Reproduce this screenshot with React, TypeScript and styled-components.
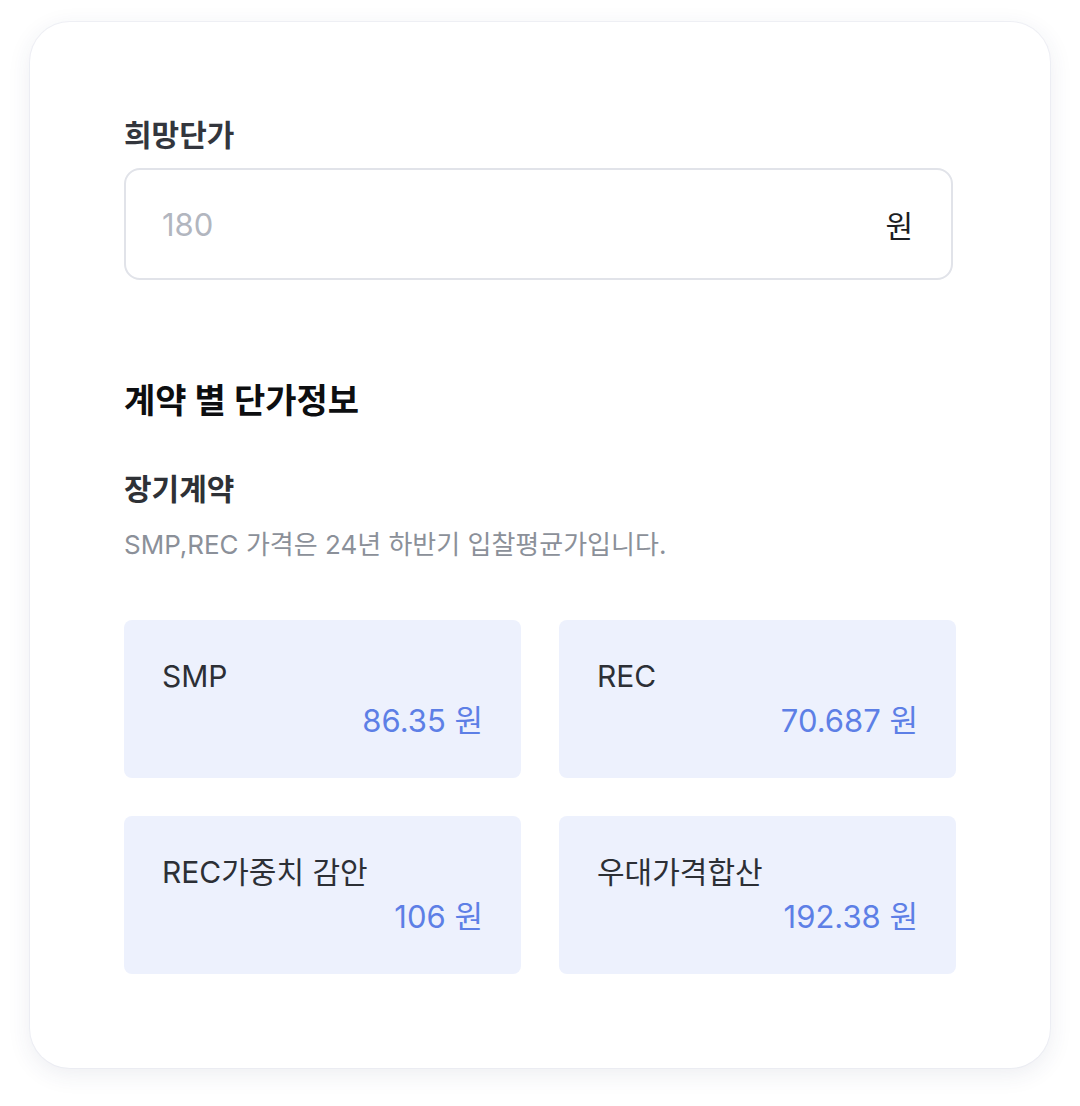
import React from 'react';
import styled, { createGlobalStyle } from 'styled-components';

const GlobalStyle = createGlobalStyle`
  body {
    margin: 0;
    background: #ffffff;
    font-family: Inter, "Noto Sans CJK KR", sans-serif;
  }
`;

const Page = styled.div`
  padding: 22px 30px 38px;
`;

const Card = styled.div`
  background: #ffffff;
  border-radius: 40px;
  box-shadow: 0 0 0 1px rgba(230, 232, 240, 0.6), 0 6px 24px rgba(40, 50, 100, 0.09);
  padding: 94px;
  display: flex;
  flex-direction: column;
`;

const FieldLabel = styled.div`
  font-size: 30px;
  font-weight: 700;
  color: #33363d;
  line-height: 34px;
  margin-top: 2px;
  margin-bottom: 16px;
`;

const InputBox = styled.div`
  width: 829px;
  height: 112px;
  box-sizing: border-box;
  border: 2px solid #e1e3e9;
  border-radius: 16px;
  display: flex;
  align-items: center;
  justify-content: space-between;
  padding: 0 38px 0 36px;
`;

const Placeholder = styled.span`
  font-size: 31px;
  color: #b2b6bf;
`;

const Unit = styled.span`
  font-size: 30px;
  color: #1c1e22;
`;

const SectionTitle = styled.h2`
  margin: 99px 0 0;
  font-size: 34px;
  font-weight: 700;
  color: #0d0e10;
  line-height: 44px;
`;

const SubTitle = styled.h3`
  margin: 48px 0 0;
  font-size: 30px;
  font-weight: 700;
  color: #2e3136;
  line-height: 36px;
`;

const Note = styled.p`
  margin: 20px 0 0;
  font-size: 26px;
  color: #8b9099;
  line-height: 36px;
`;

const PriceGrid = styled.div`
  margin-top: 57px;
  display: grid;
  grid-template-columns: 397px 397px;
  gap: 38px;
`;

const PriceTile = styled.div`
  background: #edf1fd;
  border-radius: 8px;
  height: 158px;
  box-sizing: border-box;
  padding: 36px 38px 0;
  display: flex;
  flex-direction: column;
`;

const TileLabel = styled.div`
  font-size: 30px;
  color: #2c2f35;
  line-height: 40px;
`;

const TileValue = styled.div`
  font-size: 31px;
  color: #5d7fe6;
  line-height: 40px;
  text-align: right;
  margin-top: 5px;
`;

const prices = [
  { label: 'SMP', value: '86.35' },
  { label: 'REC', value: '70.687' },
  { label: 'REC가중치 감안', value: '106' },
  { label: '우대가격합산', value: '192.38' },
];

const App: React.FC = () => {
  return (
    <Page>
      <GlobalStyle />
      <Card>
        <FieldLabel>희망단가</FieldLabel>
        <InputBox>
          <Placeholder>180</Placeholder>
          <Unit>원</Unit>
        </InputBox>

        <SectionTitle>계약 별 단가정보</SectionTitle>
        <SubTitle>장기계약</SubTitle>
        <Note>SMP,REC 가격은 24년 하반기 입찰평균가입니다.</Note>

        <PriceGrid>
          {prices.map((p) => (
            <PriceTile key={p.label}>
              <TileLabel>{p.label}</TileLabel>
              <TileValue>{p.value} 원</TileValue>
            </PriceTile>
          ))}
        </PriceGrid>
      </Card>
    </Page>
  );
};

export default App;
